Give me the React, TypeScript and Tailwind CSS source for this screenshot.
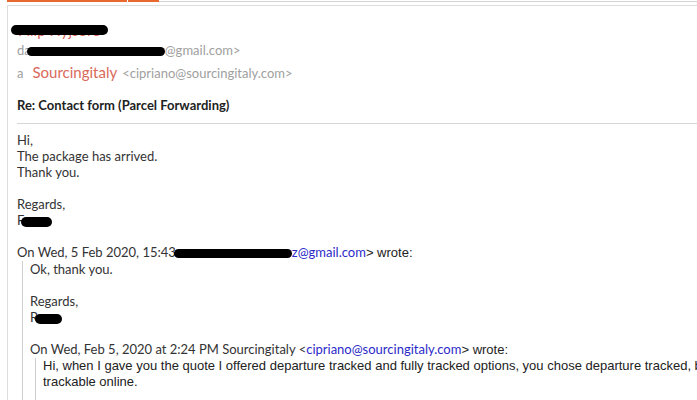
import React from 'react';

function Blob({ className }: { className: string }) {
  return <span className={`inline-block rounded-full bg-black align-middle ${className}`}></span>;
}

export default function App() {
  return (
    <div className="w-[697px] h-[400px] overflow-hidden bg-white font-['Lato','Noto_Sans',sans-serif] text-[13px] text-[#333]">
      {/* tab strip */}
      <div className="flex h-[5px] pl-[7px]">
        <div className="w-[120px] h-[2px] bg-[#e8692e]"></div>
        <div className="w-[1px]"></div>
        <div className="w-[31px] h-[2px] bg-[#e8692e]"></div>
        <div className="flex-1 h-[2px] border-t border-[#d4d4d4] mt-[1px]"></div>
      </div>

      <div className="ml-[7px] h-[395px] border-l border-t border-[#dcdcdc] pl-[9px]">
        {/* header */}
        <div className="relative h-[34px] pt-[14px] leading-[20px] text-[15px] text-[#d9695a]">
          <span className="pl-[1px]">Filip Hyjsoro</span>
          <span className="absolute -left-[6px] top-[19px] w-[97px] h-[10px] rounded-full bg-black"></span>
        </div>
        <div className="leading-[21px] text-[#a0a0a0]">
          da<Blob className="w-[138px] h-[9px] -ml-[4px]" />@gmail.com&gt;
        </div>
        <div className="leading-[23px] text-[#a0a0a0]">
          a<span className="ml-[9px] text-[15px] text-[#d9695a]">Sourcingitaly</span>
          <span className="ml-[5px]">&lt;cipriano@sourcingitaly.com&gt;</span>
        </div>
        <div className="mt-[10px] leading-[20px] font-bold text-[#222]">Re: Contact form (Parcel Forwarding)</div>
        <div className="mt-[8px] border-t border-[#d6d6d6]"></div>

        {/* body */}
        <div className="mt-[8px] leading-[16px]">
          <div>Hi,</div>
          <div>The package has arrived.</div>
          <div>Thank you.</div>
          <div className="h-[16px]"></div>
          <div>Regards,</div>
          <div>
            F<Blob className="w-[31px] h-[10px] -ml-[3px]" />
          </div>
          <div className="h-[16px]"></div>
          <div className="whitespace-nowrap">
            On Wed, 5 Feb 2020, 15:43<Blob className="w-[118px] h-[9px] -ml-[2px]" />
            <span className="text-[#2b2bc8]">z@gmail.com</span>
            <span className="font-['Liberation_Sans',Arial,sans-serif] text-[#222]">&gt; wrote:</span>
          </div>

          <div className="ml-[5px] border-l border-[#cfcfcf] pl-[7px]">
            <div>Ok, thank you.</div>
            <div className="h-[16px]"></div>
            <div>Regards,</div>
            <div>
              R<Blob className="w-[27px] h-[10px] -ml-[3px]" />
            </div>
            <div className="h-[16px]"></div>
            <div className="whitespace-nowrap">
              On Wed, Feb 5, 2020 at 2:24 PM Sourcingitaly &lt;
              <span className="text-[#2b2bc8]">cipriano@sourcingitaly.com</span>
              <span className="font-['Liberation_Sans',Arial,sans-serif] text-[#222]">&gt; wrote:</span>
            </div>
            <div className="ml-[5px] border-l border-[#cfcfcf] pl-[7px] font-['Liberation_Sans',Arial,sans-serif] text-[#222] h-[60px]">
              <div className="whitespace-nowrap">
                Hi, when I gave you the quote I offered departure tracked and fully tracked options, you chose departure tracked, but it is
              </div>
              <div>trackable online.</div>
            </div>
          </div>
        </div>
      </div>
    </div>
  );
}
